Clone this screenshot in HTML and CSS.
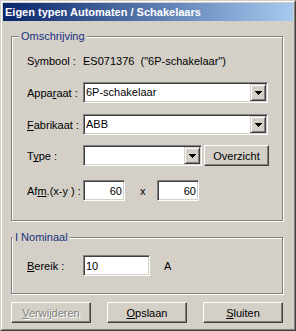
FILE: index.html
```html
<!DOCTYPE html>
<html lang="nl">
<head>
  <meta charset="UTF-8" />
  <title>Eigen typen Automaten / Schakelaars</title>
  <link rel="stylesheet" href="styles.css">
</head>
<body>
  <div class="window">
    <div class="frame">
      <div class="titlebar">Eigen typen Automaten / Schakelaars</div>

      <div class="client">
        <div class="group group-main">
          <span class="group-title">Omschrijving</span>
          <div class="rows">
            <div class="row">
              <span class="label">Symbool :</span>
              <span class="value">ES071376  ("6P-schakelaar")</span>
            </div>
            <div class="row">
              <span class="label">Appa<u>r</u>aat :</span>
              <div class="field combo combo-wide">
                <span class="combo-text">6P-schakelaar</span>
                <span class="combo-btn"><svg width="7" height="4" viewBox="0 0 7 4"><path d="M0 0h7v1h-1v1h-1v1h-1v1h-1v-1h-1v-1h-1v-1h-1z" fill="#000"/></svg></span>
              </div>
            </div>
            <div class="row">
              <span class="label"><u>F</u>abrikaat :</span>
              <div class="field combo combo-wide">
                <span class="combo-text">ABB</span>
                <span class="combo-btn"><svg width="7" height="4" viewBox="0 0 7 4"><path d="M0 0h7v1h-1v1h-1v1h-1v1h-1v-1h-1v-1h-1v-1h-1z" fill="#000"/></svg></span>
              </div>
            </div>
            <div class="row row-type">
              <span class="label">T<u>y</u>pe :</span>
              <div class="field combo combo-short">
                <span class="combo-text"></span>
                <span class="combo-btn"><svg width="7" height="4" viewBox="0 0 7 4"><path d="M0 0h7v1h-1v1h-1v1h-1v1h-1v-1h-1v-1h-1v-1h-1z" fill="#000"/></svg></span>
              </div>
              <button class="btn btn-small">Overzicht</button>
            </div>
            <div class="row row-afm">
              <span class="label">Af<u>m</u>.(x-y ) :</span>
              <div class="field num">60</div>
              <span class="times">x</span>
              <div class="field num">60</div>
            </div>
          </div>
        </div>

        <div class="group group-nominaal">
          <span class="group-title">I Nominaal</span>
          <div class="row">
            <span class="label"><u>B</u>ereik :</span>
            <div class="field range">10</div>
            <span class="unit">A</span>
          </div>
        </div>

        <div class="buttons">
          <button class="btn disabled"><u>V</u>erwijderen</button>
          <button class="btn"><u>O</u>pslaan</button>
          <button class="btn"><u>S</u>luiten</button>
        </div>
      </div>
    </div>
  </div>
</body>
</html>
```

FILE: styles.css
```css
body {
  margin: 0;
  font-family: "Liberation Sans", Arial, sans-serif;
  font-size: 11px;
  color: #000;
  background: #d4d0c8;
}
u { text-decoration-skip-ink: none; }

/* classic window frame */
.window {
  width: 296px;
  height: 331px;
  box-sizing: border-box;
  border: 1px solid;
  border-color: #d4d0c8 #404040 #404040 #d4d0c8;
  background: #d4d0c8;
}
.frame {
  height: 100%;
  box-sizing: border-box;
  border: 1px solid;
  border-color: #fff #808080 #808080 #fff;
  padding: 1px;
}
.titlebar {
  height: 18px;
  line-height: 18px;
  padding-left: 2px;
  background: linear-gradient(to right, #0a246a, #a6caf0);
  color: #fff;
  font-weight: bold;
  white-space: nowrap;
}
.client { padding-left: 8px; }

/* group boxes */
.group {
  position: relative;
  width: 272px;
  box-sizing: border-box;
  border: 1px solid #808080;
  box-shadow: inset 1px 1px #fff, 1px 1px #fff;
  padding-left: 15px;
}
.group-title {
  position: absolute;
  top: -7px;
  padding: 0 2px;
  line-height: 13px;
  background: #d4d0c8;
  color: #16307e;
}
.group-main { margin-top: 15px; height: 185px; padding-top: 13px; }
.group-main .group-title { left: 7px; }
.group-nominaal { margin-top: 16px; height: 57px; padding-top: 17px; }
.group-nominaal .group-title { left: 1px; }

.rows { display: flex; flex-direction: column; gap: 11px; }
.row { display: flex; align-items: center; height: 21px; }
.row-type { margin-top: -1px; }
.row-afm { margin-top: 3px; }
.label { width: 56px; flex: none; white-space: nowrap; }
.value { white-space: pre; }

/* sunken fields */
.field {
  box-sizing: border-box;
  height: 21px;
  padding: 1px;
  background: #fff;
  border: 1px solid;
  border-color: #808080 #fff #fff #808080;
  box-shadow: inset 1px 1px #404040, inset -1px -1px #d4d0c8;
  display: flex;
  align-items: center;
  flex: none;
}
.combo-wide { width: 185px; }
.combo-short { width: 119px; margin-right: 2px; }
.combo-text { flex: 1; padding-left: 1px; line-height: 17px; }
.combo-btn {
  width: 16px;
  height: 17px;
  box-sizing: border-box;
  background: #d4d0c8;
  border: 1px solid;
  border-color: #d4d0c8 #404040 #404040 #d4d0c8;
  box-shadow: inset 1px 1px #fff, inset -1px -1px #808080;
  display: flex;
  align-items: center;
  justify-content: center;
}
.combo-btn svg { display: block; }

.num { width: 42px; justify-content: flex-end; padding-right: 2px; }
.times { width: 32px; box-sizing: border-box; padding-left: 15px; flex: none; }
.range { width: 67px; padding-left: 2px; }
.unit { margin-left: 14px; }

/* buttons */
.btn {
  box-sizing: border-box;
  width: 80px;
  height: 21px;
  padding: 0;
  font: inherit;
  color: #000;
  background: #d4d0c8;
  border: 1px solid;
  border-color: #fff #404040 #404040 #fff;
  box-shadow: inset -1px -1px #808080;
}
.btn-small { width: 65px; height: 21px; }
.btn.disabled { color: #808080; text-shadow: 1px 1px #fff; }
.buttons { display: flex; gap: 16px; margin-top: 8px; }
```
